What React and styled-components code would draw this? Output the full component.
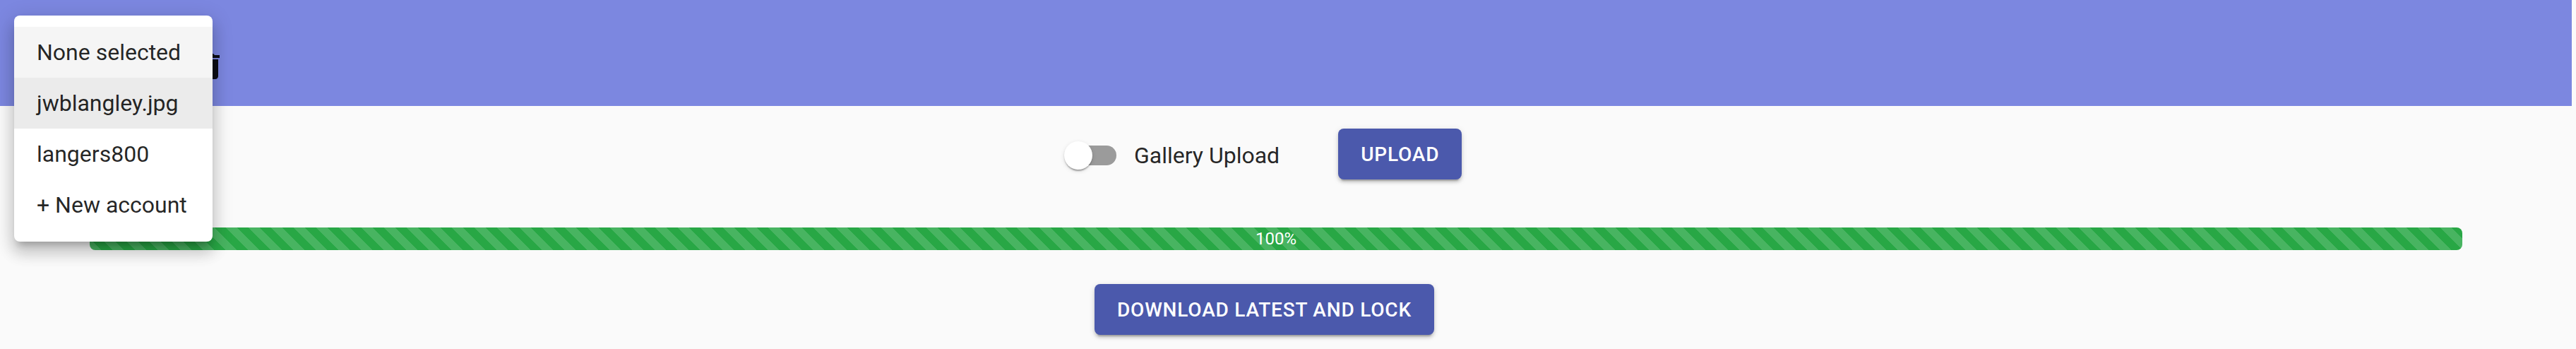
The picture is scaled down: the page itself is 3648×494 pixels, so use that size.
import React from 'react';
import styled, { createGlobalStyle } from 'styled-components';

const GlobalStyle = createGlobalStyle`
  html, body {
    margin: 0;
    padding: 0;
    background: #fafafa;
    font-family: Roboto, "Liberation Sans", Arial, sans-serif;
    color: rgba(0, 0, 0, 0.87);
  }
  * { box-sizing: border-box; }
`;

const Page = styled.div`
  position: relative;
  width: 3648px;
  height: 494px;
  overflow: hidden;
  background: #fafafa;
`;

// the account select sits under the open menu, only the delete button shows
const Header = styled.header`
  height: 150px;
  margin-right: 6px;
  background: #7c87e0;
  display: flex;
  align-items: flex-end;
  padding: 0 0 8px 249px;
`;

const IconButton = styled.button`
  width: 96px;
  height: 96px;
  padding: 24px;
  border: 0;
  border-radius: 50%;
  background: transparent;
  display: flex;
  align-items: center;
  justify-content: center;
  color: rgba(0, 0, 0, 0.9);
  svg { display: block; width: 48px; height: 48px; }
`;

const Main = styled.main`
  display: flex;
  flex-direction: column;
`;

const UploadRow = styled.div`
  margin-top: 32px;
  display: flex;
  align-items: flex-start;
  padding-left: 1489px;
  gap: 83px;
`;

const SwitchLabel = styled.label`
  display: flex;
  align-items: center;
  font-size: 32px;
  line-height: 48px;
  color: rgba(0, 0, 0, 0.87);
`;

const SwitchRoot = styled.span`
  position: relative;
  display: inline-block;
  width: 116px;
  height: 76px;
  flex-shrink: 0;
`;

const Track = styled.span`
  position: absolute;
  left: 24px;
  top: 24px;
  width: 68px;
  height: 28px;
  border-radius: 14px;
  background: #9b9b9b;
`;

const Thumb = styled.span`
  position: absolute;
  left: 18px;
  top: 18px;
  width: 40px;
  height: 40px;
  border-radius: 50%;
  background: #ffffff;
  box-shadow: 0px 4px 2px -2px rgba(0, 0, 0, 0.2),
    0px 2px 2px 0px rgba(0, 0, 0, 0.14),
    0px 2px 6px 0px rgba(0, 0, 0, 0.12);
`;

const LabelText = styled.span`
  margin-left: 1px;
`;

const Button = styled.button`
  height: 72px;
  padding: 0 32px;
  border: 0;
  border-radius: 8px;
  background: #4b59ac;
  color: #ffffff;
  font-family: Roboto, "Liberation Sans", Arial, sans-serif;
  font-size: 28px;
  font-weight: 500;
  letter-spacing: 0.8px;
  text-transform: uppercase;
  box-shadow: 0px 6px 2px -4px rgba(0, 0, 0, 0.2),
    0px 4px 4px 0px rgba(0, 0, 0, 0.14),
    0px 2px 10px 0px rgba(0, 0, 0, 0.12);
`;

const ProgressTrack = styled.div`
  margin: 64px 161px 0 127px;
  height: 32px;
  border-radius: 8px;
  overflow: hidden;
  background: #e9ecef;
`;

const ProgressFill = styled.div`
  height: 100%;
  display: flex;
  align-items: center;
  justify-content: center;
  color: #ffffff;
  font-size: 24px;
  line-height: 32px;
  background-color: #28a745;
  background-image: linear-gradient(
    45deg,
    rgba(255, 255, 255, 0.15) 25%,
    transparent 25%,
    transparent 50%,
    rgba(255, 255, 255, 0.15) 50%,
    rgba(255, 255, 255, 0.15) 75%,
    transparent 75%,
    transparent
  );
  background-size: 32px 32px;
`;

const DownloadRow = styled.div`
  margin-top: 48px;
  display: flex;
  padding-left: 1550px;
`;

const Menu = styled.ul`
  position: absolute;
  left: 20px;
  top: 22px;
  margin: 0;
  padding: 16px 0;
  list-style: none;
  min-width: 281px;
  background: #ffffff;
  border-radius: 8px;
  box-shadow: 0px 10px 10px -6px rgba(0, 0, 0, 0.2),
    0px 16px 20px 2px rgba(0, 0, 0, 0.14),
    0px 6px 28px 4px rgba(0, 0, 0, 0.12);
`;

const MenuItem = styled.li`
  height: 72px;
  padding: 0 32px;
  display: flex;
  align-items: center;
  font-size: 32px;
  line-height: 48px;
  white-space: nowrap;
  color: rgba(0, 0, 0, 0.87);
  background: ${(p) => (p.$selected ? '#ebebeb' : p.$focused ? '#f5f5f5' : 'transparent')};
`;

const DeleteIcon = () => (
  <svg viewBox="0 0 24 24" fill="currentColor">
    <path d="M6 19c0 1.1.9 2 2 2h8c1.1 0 2-.9 2-2V7H6v12zM19 4h-3.5l-1-1h-5l-1 1H5v2h14V4z" />
  </svg>
);

const accounts = [
  { label: 'None selected', focused: true },
  { label: 'jwblangley.jpg', selected: true },
  { label: 'langers800' },
  { label: '+ New account' },
];

export default function App() {
  return (
    <>
      <GlobalStyle />
      <Page>
        <Header>
          <IconButton aria-label="delete account">
            <DeleteIcon />
          </IconButton>
        </Header>
        <Main>
          <UploadRow>
            <SwitchLabel>
              <SwitchRoot>
                <Track />
                <Thumb />
              </SwitchRoot>
              <LabelText>Gallery Upload</LabelText>
            </SwitchLabel>
            <Button>Upload</Button>
          </UploadRow>
          <ProgressTrack>
            <ProgressFill style={{ width: '100%' }}>100%</ProgressFill>
          </ProgressTrack>
          <DownloadRow>
            <Button>Download latest and lock</Button>
          </DownloadRow>
        </Main>
        <Menu>
          {accounts.map((a) => (
            <MenuItem key={a.label} $selected={a.selected} $focused={a.focused}>
              {a.label}
            </MenuItem>
          ))}
        </Menu>
      </Page>
    </>
  );
}
